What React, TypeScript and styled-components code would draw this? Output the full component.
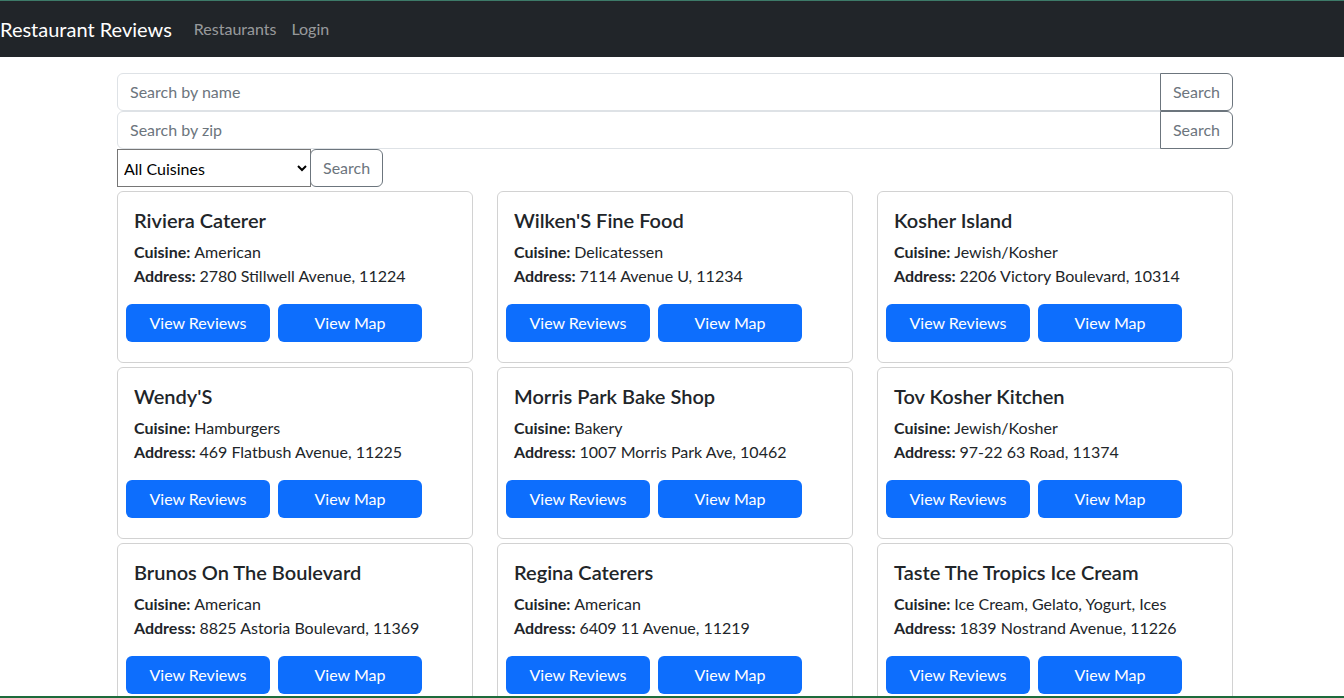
import React from 'react';
import styled, { createGlobalStyle } from 'styled-components';

const GlobalStyle = createGlobalStyle`
	html, body {
		margin: 0;
		padding: 0;
		background: #fff;
	}
	body {
		font-family: Lato, 'Liberation Sans', sans-serif;
		font-size: 16px;
		line-height: 1.5;
		color: #212529;
	}
	* {
		box-sizing: border-box;
	}
`;

const Frame = styled.div`
	height: 100vh;
	display: flex;
	flex-direction: column;
	border-top: 1px solid #3d7a68;
	border-bottom: 2px solid #1d6b3c;
	overflow: hidden;
`;

const Navbar = styled.nav`
	flex: none;
	height: 56px;
	background: #212529;
	display: flex;
	align-items: center;
`;

const Brand = styled.a`
	font-size: 20px;
	color: #fff;
	text-decoration: none;
	margin-right: 22px;
	line-height: 30px;
`;

const NavLink = styled.a`
	font-size: 16px;
	color: rgba(255, 255, 255, 0.55);
	text-decoration: none;
	margin-right: 15px;
`;

const Container = styled.main`
	width: 1116px;
	margin: 16px 0 0 117px;
`;

const InputGroup = styled.div`
	display: flex;
	height: 38px;
`;

const TextInput = styled.input`
	flex: 1;
	font: inherit;
	font-size: 16px;
	padding: 6px 12px;
	border: 1px solid #dee2e6;
	border-radius: 6px 0 0 6px;
	color: #212529;
	outline: none;

	&::placeholder {
		color: #6c757d;
	}
`;

const OutlineButton = styled.button<{ $rounded?: 'right' | 'all' }>`
	font: inherit;
	font-size: 16px;
	padding: 6px 12px;
	background: #fff;
	color: #6c757d;
	border: 1px solid #6c757d;
	border-radius: ${(p) => (p.$rounded === 'right' ? '0 6px 6px 0' : '6px')};
	margin-left: -1px;
	cursor: pointer;
`;

const Select = styled.select`
	width: 194px;
	font: inherit;
	font-size: 16px;
	color: #000;
	padding: 0 2px;
	border: 1px solid #767676;
	border-radius: 0;
	background: #fff;
`;

const Grid = styled.div`
	display: grid;
	grid-template-columns: repeat(3, 356px);
	column-gap: 24px;
	row-gap: 4px;
	margin-top: 4px;
`;

const Card = styled.div`
	border: 1px solid rgba(0, 0, 0, 0.175);
	border-radius: 6px;
	padding: 16px 16px 20px;
`;

const Title = styled.h5`
	margin: 0 0 8px;
	font-size: 20px;
	font-weight: 600;
	line-height: 24px;
`;

const Info = styled.p`
	margin: 0 0 16px;
	line-height: 24px;
`;

const ButtonRow = styled.div`
	display: flex;
	gap: 8px;
	margin-left: -8px;
`;

const PrimaryButton = styled.a`
	width: 144px;
	height: 38px;
	display: flex;
	align-items: center;
	justify-content: center;
	background: #0d6efd;
	color: #fff;
	border-radius: 6px;
	text-decoration: none;
	font-size: 16px;
`;

const restaurants = [
	{ name: 'Riviera Caterer', cuisine: 'American', address: '2780 Stillwell Avenue, 11224' },
	{ name: "Wilken'S Fine Food", cuisine: 'Delicatessen', address: '7114 Avenue U, 11234' },
	{ name: 'Kosher Island', cuisine: 'Jewish/Kosher', address: '2206 Victory Boulevard, 10314' },
	{ name: "Wendy'S", cuisine: 'Hamburgers', address: '469 Flatbush Avenue, 11225' },
	{ name: 'Morris Park Bake Shop', cuisine: 'Bakery', address: '1007 Morris Park Ave, 10462' },
	{ name: 'Tov Kosher Kitchen', cuisine: 'Jewish/Kosher', address: '97-22 63 Road, 11374' },
	{ name: 'Brunos On The Boulevard', cuisine: 'American', address: '8825 Astoria Boulevard, 11369' },
	{ name: 'Regina Caterers', cuisine: 'American', address: '6409 11 Avenue, 11219' },
	{ name: 'Taste The Tropics Ice Cream', cuisine: 'Ice Cream, Gelato, Yogurt, Ices', address: '1839 Nostrand Avenue, 11226' },
];

const App = () => {
	return (
		<Frame>
			<GlobalStyle />
			<Navbar>
				<Brand href="#">Restaurant Reviews</Brand>
				<NavLink href="#">Restaurants</NavLink>
				<NavLink href="#">Login</NavLink>
			</Navbar>
			<Container>
				<InputGroup>
					<TextInput placeholder="Search by name" />
					<OutlineButton $rounded="right">Search</OutlineButton>
				</InputGroup>
				<InputGroup>
					<TextInput placeholder="Search by zip" />
					<OutlineButton $rounded="right">Search</OutlineButton>
				</InputGroup>
				<InputGroup>
					<Select defaultValue="All Cuisines">
						<option>All Cuisines</option>
					</Select>
					<OutlineButton $rounded="all">Search</OutlineButton>
				</InputGroup>
				<Grid>
					{restaurants.map((r) => (
						<Card key={r.name}>
							<Title>{r.name}</Title>
							<Info>
								<strong>Cuisine: </strong>
								{r.cuisine}
								<br />
								<strong>Address: </strong>
								{r.address}
							</Info>
							<ButtonRow>
								<PrimaryButton href="#">View Reviews</PrimaryButton>
								<PrimaryButton href="#">View Map</PrimaryButton>
							</ButtonRow>
						</Card>
					))}
				</Grid>
			</Container>
		</Frame>
	);
};

export default App;
